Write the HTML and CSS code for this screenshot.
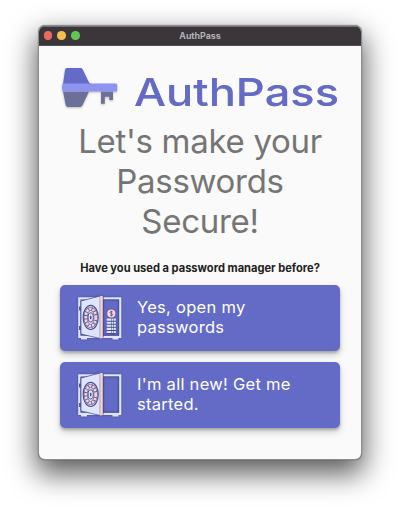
FILE: index.html
```html
<!DOCTYPE html>
<html lang="en">
<head>
<meta charset="utf-8">
<title>AuthPass</title>
<link rel="stylesheet" href="styles.css">
</head>
<body>
<svg class="defs" width="0" height="0" aria-hidden="true">
  <symbol id="safe" viewBox="0 0 44 46">
    <path d="M3 42h6v2.500h-6zM34.500 42h6v2.500h-6z" fill="#dfe4ff"/>
    <path d="M1.300 3.300H42.200V41.800H1.300z" fill="none" stroke="#dfe4ff" stroke-width="2.200"/>
    <path d="M26 4.800H40.700V40.300H26" fill="none" stroke="#454b88" stroke-width=".6"/>
    <path d="M1 11.500h3v4H1zM1 31h3v4H1z" fill="#5057a0"/>
    <path d="M3 6L22.200 1V43.500L3 39z" fill="#dfe4ff" stroke="#414783" stroke-width=".7"/>
    <path d="M22.200 .8L25 1.300V42.700L22.200 43.700z" fill="#ffd3d3"/>
    <path d="M25.200 1.500V42.500" stroke="#3f4580" stroke-width=".8"/>
    <ellipse cx="12.700" cy="22.400" rx="7.500" ry="12.100" fill="#dfe4ff" stroke="#484e8e" stroke-width="1.200"/>
    <ellipse cx="12.700" cy="22.400" rx="5" ry="8.600" fill="none" stroke="#545b99" stroke-width="3.700"/>
    <ellipse cx="12.700" cy="22.400" rx="5" ry="8.600" fill="none" stroke="#ffcfcf" stroke-width="2.700" stroke-dasharray="2.500 .9"/>
    <ellipse cx="12.700" cy="22.400" rx="2.600" ry="4.600" fill="#dfe4ff" stroke="#454c8d" stroke-width="1"/>
    <ellipse cx="12.700" cy="22.400" rx=".8" ry="2" fill="#454c8d"/>
  </symbol>
  <symbol id="contents" viewBox="0 0 44 46">
    <path d="M29 24h9v14.500h-9z" fill="#454c88"/>
    <path d="M28.700 24.600h9.200M28.700 27.700h9.200M28.700 30.800h9.200M28.700 33.900h9.200M28.700 37h9.200" stroke="#dfe4ff" stroke-width="2.100" stroke-dasharray="4.300 .5 1.800 .5"/>
    <circle cx="33.300" cy="18.500" r="4.100" fill="#ffd3d3"/>
    <path d="M34.700 17c-.5-.8-2.700-.7-2.700.4 0 1.300 2.800.8 2.800 2.200 0 1.200-2.300 1.300-2.900.3M33.400 15.800v5.500" fill="none" stroke="#4a508e" stroke-width=".8"/>
  </symbol>
</svg>
<main class="window">
  <header class="titlebar">
    <div class="lights"><i class="red"></i><i class="yellow"></i><i class="green"></i></div>
    <span>AuthPass</span>
  </header>
  <section class="content">
    <svg class="logo" viewBox="0 0 280 52" role="img" aria-label="AuthPass">
      <g class="key">
        <path d="M3 18L5 4Q5.300 2 7 2H20.500Q21.800 2 22.500 3L29 16.500L31 18z" fill="#636bc6"/>
        <path d="M3 25.500H29L22.500 39.300Q21.800 41 20 41H8Q6.200 41 5.700 39z" fill="#6c7098"/>
        <path d="M41 25.500h12v8.500h-3.700v-3.200h-4.500v6.900H41z" fill="#6c7098"/>
        <path d="M2.700 17.500H56Q57.200 17.500 57.200 19V24Q57.200 25.500 56 25.500H2.700Q1.300 21.500 2.700 17.500z" fill="#8d93ef"/>
      </g>
      <text class="wordmark" x="74" y="40" textLength="205" lengthAdjust="spacingAndGlyphs">AuthPass</text>
    </svg>
    <h1>Let's make your<br>Passwords<br>Secure!</h1>
    <p class="question">Have you used a password manager before?</p>
    <button class="choice">
      <svg viewBox="0 0 44 46"><use href="#safe"/><use href="#contents"/></svg>
      <span>Yes, open my<br>passwords</span>
    </button>
    <button class="choice">
      <svg viewBox="0 0 44 46"><use href="#safe"/></svg>
      <span>I'm all new! Get me<br>started.</span>
    </button>
  </section>
</main>
</body>
</html>
```

FILE: styles.css
```css
* { box-sizing: border-box; }
body {
  margin: 0;
  height: 510px;
  padding: 25px 38px;
  background: #fff;
  font-family: Inter, "Liberation Sans", sans-serif;
  overflow: hidden;
}
.defs { display: none; }
.window {
  width: 324px;
  height: 434.500px;
  border-radius: 7px;
  overflow: hidden;
  background: #fafafa;
  border: .5px solid #8c8b8d;
  box-shadow: 0 0 1px rgba(0,0,0,.6), 0 12px 28px 2px rgba(0,0,0,.64);
}
.titlebar {
  display: grid;
  grid-template-columns: 60px 1fr 60px;
  align-items: center;
  height: 20px;
  background: #3a363a;
  border-top: 1px solid #747174;
  border-bottom: 1px solid #514e51;
  color: #b5b3b5;
  font-size: 8.800px;
  font-weight: 700;
  line-height: 14px;
  padding-bottom: 1px;
  text-align: center;
}
.lights { display: flex; gap: 5.200px; padding-left: 4.800px; }
.lights i { width: 8.500px; height: 8.500px; border-radius: 50%; }
.red { background: #ed6a5f; }
.yellow { background: #f5bf50; }
.green { background: #62c655; }
.content { padding: 20px 21px 0; }
.logo { display: block; width: 280px; height: 52px; overflow: visible; }
.key { filter: drop-shadow(0 1px 1px rgba(0,0,0,.25)); }
.wordmark {
  font-family: Inter, sans-serif;
  font-size: 38px;
  font-weight: 550;
  fill: #636bc6;
  filter: drop-shadow(0 .5px .7px rgba(0,0,0,.3));
}
h1 {
  margin: 4px 0 0;
  color: #757575;
  font-size: 33px;
  line-height: 39.800px;
  font-weight: 400;
  letter-spacing: -.3px;
  text-align: center;
}
.question {
  margin: 20px 0 9.500px;
  color: #202020;
  font-size: 11.100px;
  line-height: 14px;
  font-weight: 700;
  text-align: center;
  white-space: nowrap;
}
.choice {
  display: flex;
  align-items: center;
  gap: 15.500px;
  width: 280px;
  height: 66px;
  margin: 0 0 10.700px;
  padding: 0 0 0 17.500px;
  border: 0;
  border-radius: 5px;
  background: #636bc6;
  box-shadow: 0 2px 3px rgba(0,0,0,.22), 0 4px 7px rgba(0,0,0,.18);
  color: #fff;
  font: 400 16.500px/20px Inter, "Liberation Sans", sans-serif;
  letter-spacing: .28px;
  text-align: left;
  white-space: nowrap;
}
.choice svg { width: 44px; height: 46px; filter: drop-shadow(0 .5px 1px rgba(0,0,0,.3)); }
.choice span { padding-bottom: 1px; }
```
